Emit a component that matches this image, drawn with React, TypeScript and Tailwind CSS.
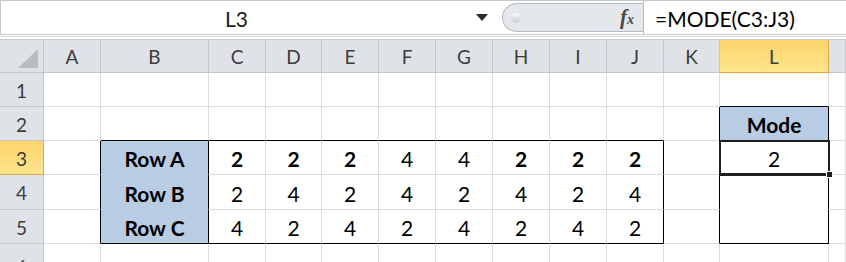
import React from 'react';

const font = { fontFamily: 'Lato, "Open Sans", "Liberation Sans", sans-serif' };

const columns = ['A', 'B', 'C', 'D', 'E', 'F', 'G', 'H', 'I', 'J', 'K', 'L', ''];

const data = [
  { label: 'Row A', values: [2, 2, 2, 4, 4, 2, 2, 2], boldTwos: true },
  { label: 'Row B', values: [2, 4, 2, 4, 2, 4, 2, 4], boldTwos: false },
  { label: 'Row C', values: [4, 2, 4, 2, 4, 2, 4, 2], boldTwos: false },
];

const grid = 'border-r border-b border-[#dadcdf]';

function RowHeader({ n, active }: { n: number; active?: boolean }) {
  return (
    <div
      className={
        active
          ? 'flex items-center justify-center border-r border-b border-[#e2a93a] bg-gradient-to-b from-[#fcd46a] to-[#fde48c] text-[19px] text-[#3c3c3c]'
          : 'flex items-center justify-center border-r border-b border-[#c3c7cc] bg-[#dfe3e8] text-[19px] text-[#3c3c3c]'
      }
    >
      <span className="pt-[3px]">{n}</span>
    </div>
  );
}

function Cell({ className = '', children }: { className?: string; children?: React.ReactNode }) {
  return (
    <div className={`flex items-center justify-center text-[21px] text-black ${className}`}>
      <span className="pt-[3px]">{children}</span>
    </div>
  );
}

export default function App() {
  return (
    <div className="w-[846px] h-[262px] overflow-hidden bg-white" style={font}>
      {/* formula bar */}
      <div className="flex h-[35px] border-t border-b border-[#c5c9ce] bg-white">
        <div className="w-[472px] flex items-center justify-center text-[21px] text-[#1a1a1a] border-l border-[#c5c9ce]">
          <span className="pt-[2px]">L3</span>
        </div>
        <div className="w-[20px] flex items-center justify-center">
          <svg width="12" height="7" viewBox="0 0 12 7">
            <polygon points="0,0 12,0 6,7" fill="#2b2b2b" />
          </svg>
        </div>
        <div className="w-[10px]" />
        <div className="relative w-[141px] my-[2px] flex items-center justify-end pr-[9px] rounded-l-full border border-r-0 border-[#b9bdc2] bg-[#e4e7eb]">
          <div className="absolute left-[8px] top-[9px] w-[10px] h-[10px] rounded-full bg-gradient-to-b from-[#f7f8f9] to-[#c9ccd0]" />
          <span
            className="text-[21px] font-bold italic text-[#4a4a4a] leading-none"
            style={{ fontFamily: '"Liberation Serif", serif' }}
          >
            f<span className="text-[14px]">x</span>
          </span>
        </div>
        <div className="flex-1 flex items-center border-l border-[#b9bdc2] pl-[11px] text-[21px] text-black">
          <span className="pt-[2px]">=MODE(C3:J3)</span>
        </div>
      </div>
      <div className="h-[1px]" />
      <div className="h-[3px] border-t border-[#d3d6da]" />

      {/* sheet */}
      <div className="relative grid grid-cols-[44px_57px_108px_57px_56px_57px_57px_57px_57px_57px_57px_56px_109px_1fr] grid-rows-[33px_34px_34px_34px_35px_34px_34px] border-t border-[#c3c7cc]">
        {/* column headers */}
        <div className="relative border-r border-b border-[#c3c7cc] bg-[#dfe3e8]">
          <svg className="absolute right-[5px] bottom-[4px]" width="20" height="19" viewBox="0 0 20 19">
            <polygon points="20,0 20,19 0,19" fill="#b9bdc2" />
          </svg>
        </div>
        {columns.map((c) =>
          c === 'L' ? (
            <div
              key={c}
              className="flex items-center justify-center border-r border-b border-[#e2a93a] bg-gradient-to-b from-[#fcd46a] to-[#fde48c] text-[19px] text-[#3c3c3c]"
            >
              <span className="pt-[3px]">{c}</span>
            </div>
          ) : (
            <div
              key={c || 'M'}
              className="flex items-center justify-center border-r border-b border-[#c3c7cc] bg-[#dfe3e8] text-[19px] text-[#3c3c3c]"
            >
              <span className="pt-[3px]">{c}</span>
            </div>
          )
        )}

        {/* row 1 */}
        <RowHeader n={1} />
        {columns.map((c, i) => (
          <Cell key={i} className={c === 'L' ? 'border-r border-b border-r-[#dadcdf] border-b-black' : grid} />
        ))}

        {/* row 2 */}
        <RowHeader n={2} />
        {columns.map((c, i) => {
          if (c === 'L') return <Cell key={i} className="border-r border-b border-black bg-[#b8cce4] font-bold">Mode</Cell>;
          if (c === 'K') return <Cell key={i} className="border-r border-b border-r-black border-b-[#dadcdf]" />;
          if (i >= 1 && i <= 9) return <Cell key={i} className="border-r border-b border-r-[#dadcdf] border-b-black" />;
          return <Cell key={i} className={grid} />;
        })}

        {/* rows 3-5 */}
        {data.map((row, r) => {
          const last = r === 2;
          return (
            <React.Fragment key={row.label}>
              <RowHeader n={r + 3} active={r === 0} />
              <Cell className="border-r border-b border-r-black border-b-[#dadcdf]" />
              <Cell className={`border-r border-b border-r-black bg-[#b8cce4] font-bold ${last ? 'border-b-black' : 'border-b-[#b8cce4]'}`}>
                {row.label}
              </Cell>
              {row.values.map((v, j) => (
                <Cell
                  key={j}
                  className={`border-r border-b ${j === 7 ? 'border-r-black' : 'border-r-[#dadcdf]'} ${last ? 'border-b-black' : 'border-b-[#dadcdf]'} ${row.boldTwos && v === 2 ? 'font-bold' : ''}`}
                >
                  {v}
                </Cell>
              ))}
              <Cell className="border-r border-b border-r-black border-b-[#dadcdf]" />
              <Cell className={`border-r border-b border-r-black ${r === 1 ? 'border-b-white' : 'border-b-black'}`}>
                {r === 0 ? 2 : null}
              </Cell>
              <Cell className={grid} />
            </React.Fragment>
          );
        })}

        {/* row 6 */}
        <div className="flex justify-center border-r border-[#c3c7cc] bg-[#dfe3e8] text-[19px] text-[#3c3c3c]">
          <span className="pt-[9px]">6</span>
        </div>
        {columns.map((c, i) => (
          <div key={i} className="border-r border-[#dadcdf]" />
        ))}

        {/* active cell L3 */}
        <div className="absolute left-[719px] top-[100px] w-[111px] h-[36px] border-2 border-b-[3px] border-[#1e1e1e] pointer-events-none">
          <div className="absolute inset-0 border border-white" />
          <div className="absolute right-[-5px] bottom-[-5px] w-[7px] h-[7px] bg-[#1e1e1e] border border-white" />
        </div>
      </div>
    </div>
  );
}
